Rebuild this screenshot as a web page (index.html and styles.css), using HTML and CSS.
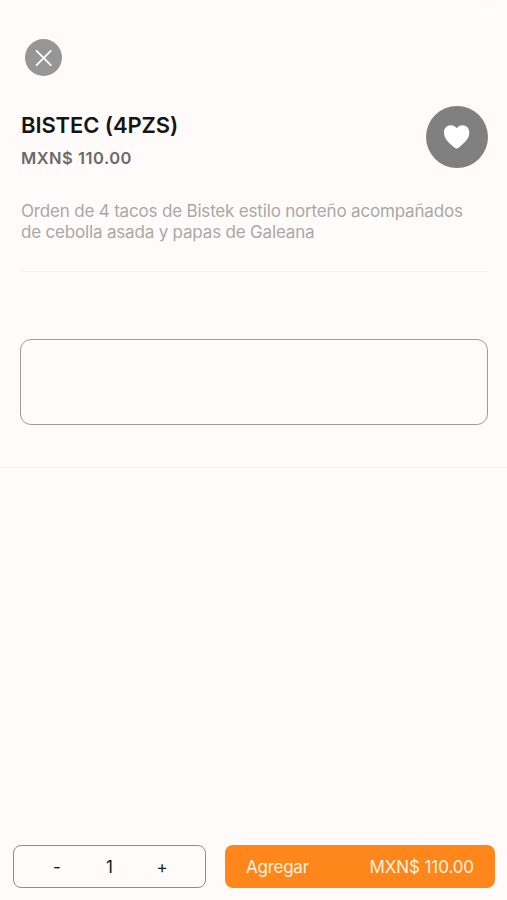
FILE: index.html
```html
<!DOCTYPE html>
<html lang="es">
<head>
  <meta charset="UTF-8" />
  <meta name="viewport" content="width=device-width, initial-scale=1.0"/>
  <title>BISTEC (4PZS)</title>
  <link rel="stylesheet" href="styles.css">
</head>
<body>
  <div class="screen">
    <div class="status-bar"><span class="battery"></span></div>

    <button type="button" class="close-btn" aria-label="Cerrar">
      <svg width="37" height="37" viewBox="0 0 37 37">
        <path d="M11.6 11.9 L25.8 26.1 M25.8 11.9 L11.6 26.1" />
      </svg>
    </button>

    <main class="product">
      <div class="product-header">
        <div>
          <h1>BISTEC (4PZS)</h1>
          <p class="price">MXN$ 110.00</p>
        </div>
        <button type="button" class="fav-btn" aria-label="Favorito">
          <svg width="26" height="24" viewBox="0 0 26 24">
            <path d="M12.6 23.6 C11.9 23.6 11.2 23 10.4 22.4 C4.6 18.2 0 13.4 0 7.6 C0 3.2 2.9 0.2 6.6 0.2 C9.3 0.2 11.3 1.4 12.6 3.3 C13.9 1.4 16 0.2 18.7 0.2 C22.4 0.2 25.3 3.2 25.3 7.6 C25.3 13.4 20.6 18.2 14.8 22.4 C14 23 13.3 23.6 12.6 23.6 Z" />
          </svg>
        </button>
      </div>
      <p class="description">Orden de 4 tacos de Bistek estilo norteño acompañados<br>de cebolla asada y papas de Galeana</p>
    </main>

    <div class="notes">
      <textarea aria-label="Notas"></textarea>
    </div>

    <!-- Bottom bar -->
    <footer class="bottom-bar">
      <div class="quantity">
        <button type="button" class="qty-btn">-</button>
        <span class="qty-value">1</span>
        <button type="button" class="qty-btn">+</button>
      </div>
      <button type="button" class="add-btn">
        <span class="add-label">Agregar</span>
        <span class="add-price">MXN$ 110.00</span>
      </button>
    </footer>
  </div>
</body>
</html>
```
FILE: styles.css
```css
* {
  box-sizing: border-box;
  margin: 0;
  padding: 0;
  font-family: Inter, sans-serif;
}
body {
  background: #fffbfa;
  overflow: hidden;
}
button {
  border: none;
  background: none;
  cursor: pointer;
}
svg {
  display: block;
}
.screen {
  display: flex;
  flex-direction: column;
  height: 100vh;
}
.status-bar {
  display: flex;
  justify-content: flex-end;
  height: 39px;
  padding: 8px 11px 0 0;
}
.battery {
  width: 23px;
  height: 7px;
  border-radius: 3px;
  background: #fffefd;
}
.close-btn {
  width: 37px;
  height: 37px;
  margin-left: 25px;
  border-radius: 50%;
  background: #969696;
}
.close-btn path {
  fill: none;
  stroke: #fff;
  stroke-width: 1.8;
  stroke-linecap: round;
}
.product {
  height: 196px;
  margin: 0 19px 0 21px;
  padding-top: 30px;
  border-bottom: 1px solid #f5f1f0;
}
.product-header {
  display: flex;
  justify-content: space-between;
  height: 95px;
}
h1 {
  margin-top: 5px;
  color: #151515;
  font-size: 22px;
  font-weight: 600;
  line-height: 28px;
  letter-spacing: -0.1px;
}
.price {
  margin-top: 9px;
  color: #6b6969;
  font-size: 16.5px;
  font-weight: 600;
  line-height: 20px;
  letter-spacing: 0.5px;
}
.fav-btn {
  display: flex;
  align-items: center;
  justify-content: center;
  width: 62px;
  height: 62px;
  border-radius: 50%;
  background: #808080;
}
.fav-btn path {
  fill: #fff;
}
.description {
  color: #aaa7a6;
  font-size: 17px;
  line-height: 21px;
  letter-spacing: -0.18px;
  white-space: nowrap;
}
.notes {
  height: 196px;
  padding: 67px 19px 0 20px;
  border-bottom: 1px solid #f5f1f0;
}
textarea {
  display: block;
  width: 100%;
  height: 86px;
  padding: 12px;
  border: 1.5px solid #9f9b9a;
  border-radius: 11px;
  background: transparent;
  font-size: 17px;
  resize: none;
  outline: none;
}
.bottom-bar {
  display: flex;
  gap: 19px;
  margin-top: auto;
  padding: 0 12px 12px 13px;
}
.quantity {
  display: flex;
  align-items: center;
  justify-content: space-between;
  width: 193px;
  height: 43px;
  padding: 0 34px;
  border: 1px solid #8f8c8b;
  border-radius: 8px;
}
.qty-btn,
.qty-value {
  width: 18px;
  color: #181818;
  font-size: 17px;
  text-align: center;
}
.add-btn {
  display: flex;
  flex: 1;
  align-items: center;
  justify-content: space-between;
  height: 43px;
  padding: 0 21px;
  border-radius: 8px;
  background: #ff861b;
  color: #fff1df;
  font-size: 17px;
}
.add-label {
  letter-spacing: -0.25px;
}
.add-price {
  letter-spacing: -0.1px;
}
```
